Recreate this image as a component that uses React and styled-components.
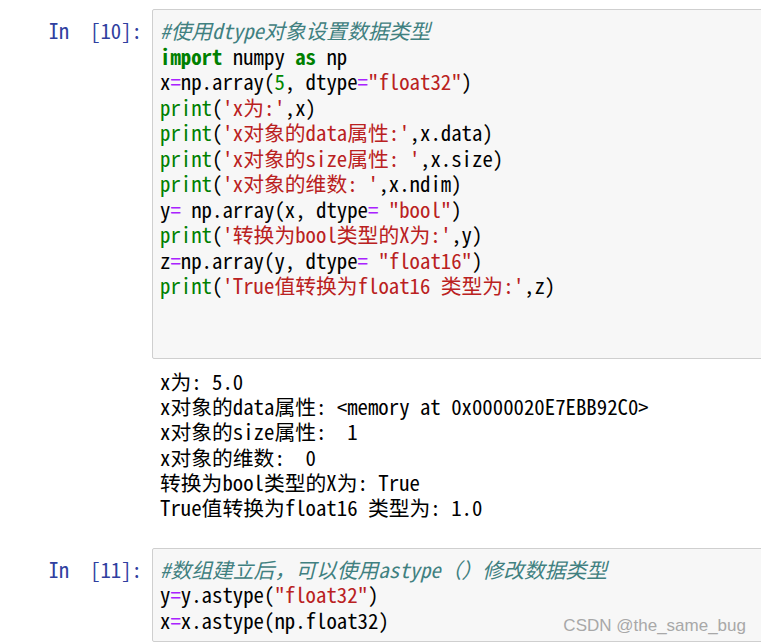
import React from 'react';
import styled, { createGlobalStyle } from 'styled-components';

const GlobalStyle = createGlobalStyle`
    html, body {
        margin: 0;
        padding: 0;
        background: #ffffff;
    }
`;

const codeFont = `"Noto Sans Mono CJK SC", "Liberation Mono", "Noto Sans CJK SC", monospace`;

const Notebook = styled.div`
    position: relative;
    width: 761px;
    height: 644px;
    overflow: hidden;
    padding-top: 9px;
    box-sizing: border-box;
    font-family: ${codeFont};
    font-size: 20.8px;
`;

const Cell = styled.div`
    display: flex;
    align-items: flex-start;
    margin-right: -6px;
    margin-top: ${p => p.$gap || 0}px;
`;

const Prompt = styled.div`
    flex: 0 0 152px;
    box-sizing: border-box;
    padding: 9px 10px 0 0;
    line-height: 25.5px;
    text-align: right;
    color: #303f9f;
    white-space: pre;
`;

const InputBox = styled.div`
    flex: 1;
    background: #f7f7f7;
    border: 1px solid #cfcfcf;
    border-radius: 2px;
`;

const Code = styled.div`
    padding: 8px 7px;
    color: #000;
`;

const Output = styled.div`
    margin-top: 10px;
    padding-left: 160px;
    color: #000;
`;

const Line = styled.div`
    height: ${p => p.$h || 25.5}px;
    line-height: ${p => p.$h || 25.5}px;
    white-space: pre;
`;

const Comment = styled.span`
    color: #408080;
    font-style: italic;
`;

const Keyword = styled.span`
    color: #008000;
    font-weight: bold;
`;

const Builtin = styled.span`
    color: #008000;
`;

const Str = styled.span`
    color: #ba2121;
`;

const Num = styled.span`
    color: #008800;
`;

const Op = styled.span`
    color: #aa22ff;
`;

const Watermark = styled.div`
    position: absolute;
    right: 15px;
    bottom: 8px;
    font-family: "Liberation Sans", Arial, sans-serif;
    font-size: 17px;
    line-height: 20px;
    color: #a8a8a8;
`;

const Print = ({ text, arg }) => (
    <Line>
        <Builtin>print</Builtin>(<Str>{text}</Str>,{arg})
    </Line>
);

const outputLines = [
    'x为: 5.0',
    'x对象的data属性: <memory at 0x0000020E7EBB92C0>',
    'x对象的size属性:  1',
    'x对象的维数:  0',
    '转换为bool类型的X为: True',
    'True值转换为float16 类型为: 1.0',
];

const App = () => {
    return (
        <>
            <GlobalStyle />
            <Notebook>
                <Cell>
                    <Prompt>{'In\u00a0\u00a0[10]:'}</Prompt>
                    <InputBox>
                        <Code>
                            <Line><Comment>#使用dtype对象设置数据类型</Comment></Line>
                            <Line><Keyword>import</Keyword> numpy <Keyword>as</Keyword> np</Line>
                            <Line>x<Op>=</Op>np.array(<Num>5</Num>, dtype<Op>=</Op><Str>"float32"</Str>)</Line>
                            <Print text="'x为:'" arg="x" />
                            <Print text="'x对象的data属性:'" arg="x.data" />
                            <Print text="'x对象的size属性: '" arg="x.size" />
                            <Print text="'x对象的维数: '" arg="x.ndim" />
                            <Line>y<Op>=</Op> np.array(x, dtype<Op>=</Op> <Str>"bool"</Str>)</Line>
                            <Print text="'转换为bool类型的X为:'" arg="y" />
                            <Line>z<Op>=</Op>np.array(y, dtype<Op>=</Op> <Str>"float16"</Str>)</Line>
                            <Print text="'True值转换为float16 类型为:'" arg="z" />
                            <Line />
                            <Line />
                        </Code>
                    </InputBox>
                </Cell>
                <Output>
                    {outputLines.map((t, i) => (
                        <Line key={i} $h={25.4}>{t}</Line>
                    ))}
                </Output>
                <Cell $gap={27}>
                    <Prompt>{'In\u00a0\u00a0[11]:'}</Prompt>
                    <InputBox>
                        <Code>
                            <Line><Comment>#数组建立后，可以使用astype（）修改数据类型</Comment></Line>
                            <Line>y<Op>=</Op>y.astype(<Str>"float32"</Str>)</Line>
                            <Line>x<Op>=</Op>x.astype(np.float32)</Line>
                        </Code>
                    </InputBox>
                </Cell>
                <Watermark>CSDN @the_same_bug</Watermark>
            </Notebook>
        </>
    );
};

export default App;
